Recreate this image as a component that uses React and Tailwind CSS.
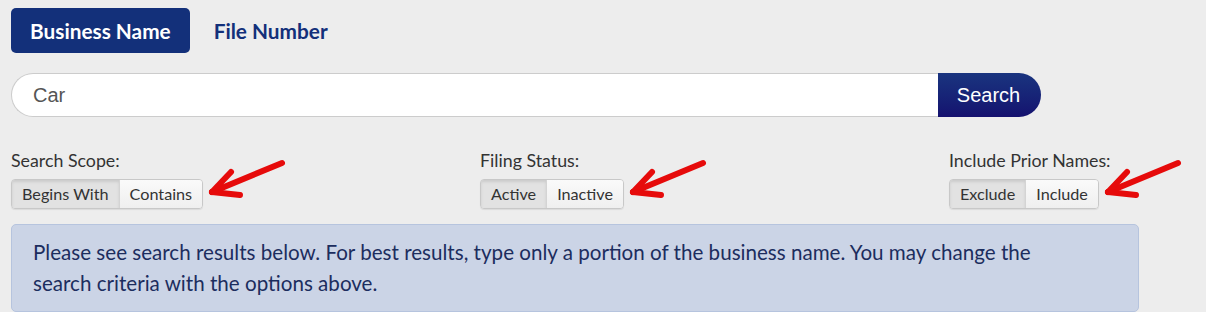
import React, { useState } from 'react';

const Arrow = () => (
  <svg
    width="84"
    height="44"
    viewBox="0 0 84 44"
    className="absolute pointer-events-none"
    style={{ left: 0, top: 0 }}
  >
    <g stroke="#e60b0b" strokeWidth="6" strokeLinecap="round" strokeLinejoin="round" fill="none">
      <path d="M76 8 L6 37" />
      <path d="M6 37 L25 17" />
      <path d="M6 37 L34 40" />
    </g>
  </svg>
);

const Toggle = ({ label, options, value, onChange }) => (
  <div className="flex flex-col">
    <div className="text-[17.8px] leading-6 text-[#333]">{label}</div>
    <div className="mt-[7px] relative flex items-start">
      <div className="flex rounded-[4px] border border-[#c8c8c8] overflow-hidden shadow-[0_1px_1px_rgba(0,0,0,0.08)]">
        {options.map((opt, i) => (
          <button
            key={opt}
            onClick={() => onChange(opt)}
            className={`h-[28px] px-[10px] text-[16.2px] leading-[28px] text-[#333] ${
              i > 0 ? 'border-l border-[#d4d4d4]' : ''
            } ${
              value === opt
                ? 'bg-[#e2e2e2] shadow-[inset_0_2px_3px_rgba(0,0,0,0.1)]'
                : 'bg-gradient-to-b from-[#fafafa] to-[#efefef]'
            }`}
          >
            {opt}
          </button>
        ))}
      </div>
      <div className="relative w-[84px] h-[44px] -mt-[24px] ml-[3px]">
        <Arrow />
      </div>
    </div>
  </div>
);

const App = () => {
  const [tab, setTab] = useState('Business Name');
  const [query, setQuery] = useState('Car');
  const [scope, setScope] = useState('Begins With');
  const [status, setStatus] = useState('Active');
  const [prior, setPrior] = useState('Exclude');

  return (
    <div className="w-[1206px] h-[312px] bg-[#ededed] font-['Lato','Liberation_Sans',sans-serif] overflow-hidden">
      <div className="pl-[11px] pt-[8px]">
        {/* Tabs */}
        <div className="flex items-center gap-[5px]">
          {['Business Name', 'File Number'].map((t) => (
            <button
              key={t}
              onClick={() => setTab(t)}
              className={`h-[45px] px-[19px] rounded-[5px] text-[20.8px] font-bold ${
                tab === t ? 'bg-[#13307a] text-white' : 'text-[#13307a]'
              }`}
            >
              {t}
            </button>
          ))}
        </div>

        {/* Search bar */}
        <div className="flex mt-[20px] h-[44px]">
          <input
            value={query}
            onChange={(e) => setQuery(e.target.value)}
            className="w-[927px] h-full bg-white border border-[#cccccc] border-r-0 rounded-l-full pl-[21px] text-[20px] text-[#555] outline-none font-['Liberation_Sans',Arial,sans-serif]"
          />
          <button className="w-[103px] h-full rounded-r-full bg-gradient-to-b from-[#1a347f] to-[#15116f] text-white text-[20px] font-['Liberation_Sans',Arial,sans-serif] pr-[2px]">
            Search
          </button>
        </div>

        {/* Options */}
        <div className="grid grid-cols-[469px_469px_1fr] mt-[31px]">
          <Toggle
            label="Search Scope:"
            options={['Begins With', 'Contains']}
            value={scope}
            onChange={setScope}
          />
          <Toggle
            label="Filing Status:"
            options={['Active', 'Inactive']}
            value={status}
            onChange={setStatus}
          />
          <Toggle
            label="Include Prior Names:"
            options={['Exclude', 'Include']}
            value={prior}
            onChange={setPrior}
          />
        </div>

        {/* Info alert */}
        <div className="mt-[15px] w-[1128px] bg-[#cbd4e6] border border-[#b6c4de] rounded-[5px] px-[21px] pt-[12px] pb-[12px] text-[20.6px] leading-[31px] text-[#1c2d5e]">
          Please see search results below. For best results, type only a portion of the business name. You may change the
          <br />
          search criteria with the options above.
        </div>
      </div>
    </div>
  );
};

export default App;
